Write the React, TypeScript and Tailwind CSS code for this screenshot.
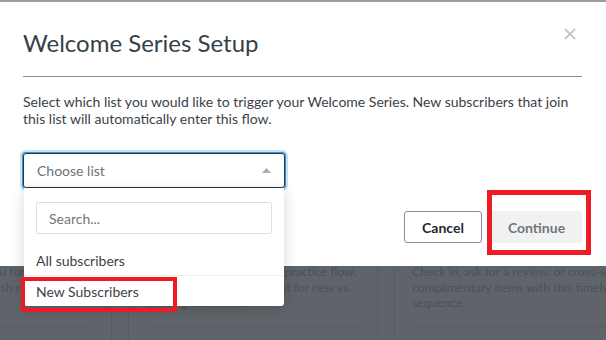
import React from "react";

const font = { fontFamily: "Lato, 'Open Sans', sans-serif" };

function Card({ lines }: { lines: string[] }) {
    return (
        <div className="w-[250px] shrink-0 border-x border-[#575c63] px-[17px] flex flex-col">
            <div className="-mt-[2px] text-[12.2px] leading-[15.5px] text-[#4b5158] whitespace-nowrap">
                {lines.map((l, i) => (
                    <div key={i}>{l}</div>
                ))}
            </div>
            <div className="mt-auto mb-[13px] border-t border-[#575c63]" />
        </div>
    );
}

export default function App() {
    return (
        <div className="relative w-[606px] h-[340px] overflow-hidden flex flex-col bg-[#5f646a]" style={font}>
            <div className="h-[2px] bg-[#9a9da1] shrink-0" />

            {/* modal */}
            <div className="relative z-10 bg-white h-[264px] shrink-0 pl-[23px] pr-[24px] pt-[25px]">
                <div className="flex items-center justify-between">
                    <h1 className="text-[24px] leading-[32px] text-[#373f47]">Welcome Series Setup</h1>
                    <svg width="12" height="12" viewBox="0 0 12 12" className="mr-[6px] -mt-[18px]">
                        <path d="M1 1L11 11M11 1L1 11" stroke="#c6c8ca" strokeWidth="2" />
                    </svg>
                </div>
                <div className="mt-[17px] border-t border-[#8b8d93]" />
                <p className="mt-[16px] text-[14px] leading-[17px] text-[#3b4249]">
                    Select which list you would like to trigger your Welcome Series. New subscribers that join
                    <br />
                    this list will automatically enter this flow.
                </p>

                {/* select */}
                <div className="relative mt-[26px] w-[262px]">
                    <div className="h-[35px] rounded-[3px] border border-[#27333f] shadow-[0_0_0_1px_#3b93d6,0_0_0_3px_#c4e2f6] flex items-center justify-between pl-[13px] pr-[13px]">
                        <span className="text-[14px] text-[#6d737a]">Choose list</span>
                        <svg width="9" height="5" viewBox="0 0 9 5">
                            <path d="M0 5L4.5 0L9 5Z" fill="#a9aeb4" />
                        </svg>
                    </div>
                    <div className="absolute left-[1px] top-[35px] w-[260px] bg-white rounded-b-[3px] shadow-[0_3px_14px_rgba(0,0,0,0.16)] pt-[14px]">
                        <div className="mx-[12px] h-[32px] border border-[#dcdfe2] rounded-[2px] flex items-center pl-[12px] text-[14px] text-[#707780]">
                            Search...
                        </div>
                        <div className="mt-[11px] pl-[12px] h-[31px] flex items-center text-[14px] text-[#3d444c] border-b border-[#eceef0]">
                            All subscribers
                        </div>
                        <div className="pl-[12px] h-[30px] flex items-center text-[14px] text-[#3d444c]">
                            New Subscribers
                        </div>
                    </div>
                </div>

                <div className="mt-[23px] flex justify-end gap-[9px]">
                    <button className="w-[78px] h-[32px] rounded-[3px] border border-[#8b8f94] text-[14px] font-bold text-[#1f2933]">
                        Cancel
                    </button>
                    <button className="w-[91px] h-[32px] rounded-[3px] bg-[#f1f1f1] text-[14px] font-bold text-[#6f7782]">
                        Continue
                    </button>
                </div>
            </div>

            {/* page behind the overlay */}
            <div className="flex-1 flex gap-[16px] -ml-[138px]">
                <Card lines={["Say hello and thank you for joining", "Give a discount or a cash reward."]} />
                <Card lines={["Get started with our best-practice flow.", "Tailor the welcome content for new vs.", "existing customers."]} />
                <Card lines={["Check in, ask for a review, or cross-sell", "complimentary items with this timely", "sequence."]} />
            </div>

            {/* annotations */}
            <div className="absolute z-20 left-[21px] top-[277px] w-[156px] h-[35px] border-[4px] border-[#ed1c24]" />
            <div className="absolute z-20 left-[487px] top-[190px] w-[104px] h-[65px] border-[5px] border-[#ed1c24]" />
        </div>
    );
}
